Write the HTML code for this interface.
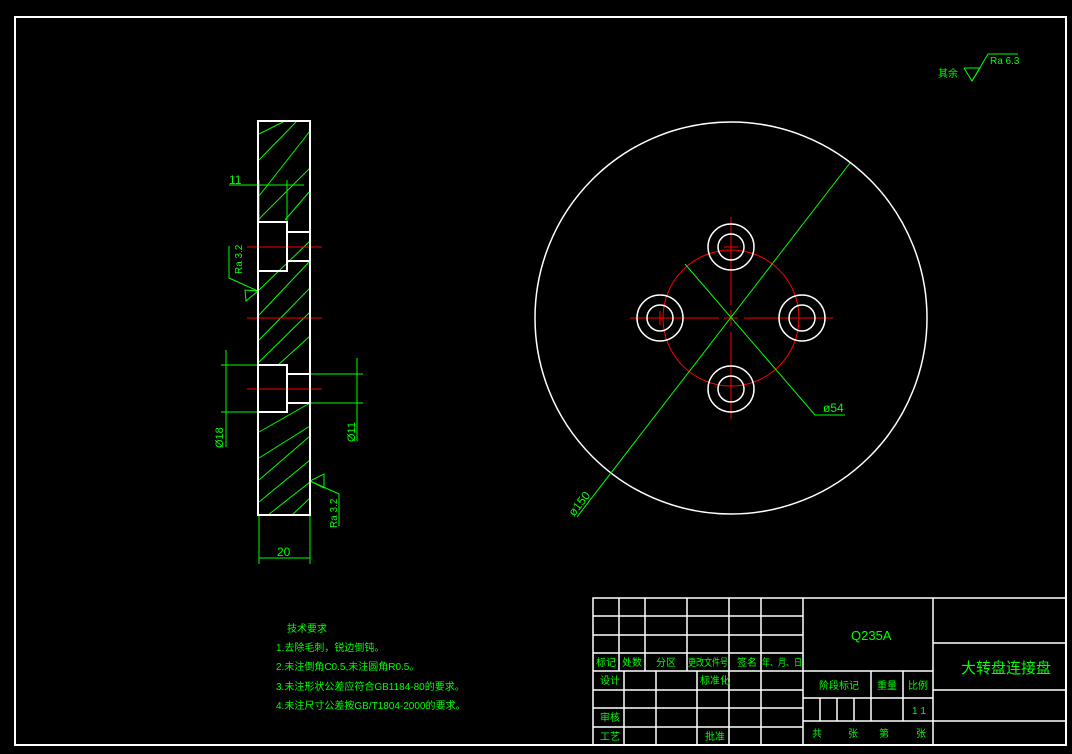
<!DOCTYPE html>
<html><head><meta charset="utf-8"><style>
html,body{margin:0;padding:0;background:#000;width:1072px;height:754px;overflow:hidden}
svg{display:block}
text{font-family:"Liberation Sans","Noto Sans CJK SC",sans-serif;fill:#00ff00}
</style></head><body>
<svg width="1072" height="754" viewBox="0 0 1072 754" xmlns="http://www.w3.org/2000/svg">
<rect x="15" y="17" width="1051" height="728" fill="none" stroke="#fff" stroke-width="2"/>
<!-- roughness top right -->
<text x="938" y="77" font-size="10">其余</text>
<polyline points="964,68 980,68 972,81 964,68" fill="none" stroke="#0f0" stroke-width="1"/>
<polyline points="972,81 988,54 1018,54" fill="none" stroke="#0f0" stroke-width="1"/>
<text x="990" y="64" font-size="10">Ra 6.3</text>

<!-- section view -->
<g stroke="#0f0" stroke-width="1">
<line x1="259" y1="134" x2="285" y2="121"/>
<line x1="259" y1="160" x2="297" y2="121"/>
<line x1="259" y1="196" x2="310" y2="131"/>
<line x1="259" y1="219" x2="310" y2="168"/>
<line x1="285" y1="220" x2="310" y2="191"/>
<line x1="259" y1="290" x2="310" y2="241"/>
<line x1="259" y1="315" x2="310" y2="261"/>
<line x1="259" y1="340" x2="310" y2="288"/>
<line x1="259" y1="362" x2="310" y2="312"/>
<line x1="278" y1="365" x2="310" y2="336"/>
<line x1="259" y1="432" x2="310" y2="403"/>
<line x1="259" y1="458" x2="310" y2="426"/>
<line x1="259" y1="480" x2="310" y2="436"/>
<line x1="259" y1="502" x2="310" y2="460"/>
<line x1="268" y1="515" x2="310" y2="482"/>
<line x1="292" y1="515" x2="310" y2="498"/>
<line x1="229" y1="185" x2="304" y2="185"/>
<line x1="259" y1="180" x2="259" y2="222"/>
<line x1="287" y1="180" x2="287" y2="222"/>
<line x1="221" y1="365" x2="258" y2="365"/>
<line x1="221" y1="412" x2="258" y2="412"/>
<line x1="226" y1="350" x2="226" y2="447"/>
<line x1="310" y1="374" x2="363" y2="374"/>
<line x1="310" y1="403" x2="363" y2="403"/>
<line x1="357" y1="358" x2="357" y2="441"/>
<line x1="259" y1="515" x2="259" y2="564"/>
<line x1="310" y1="515" x2="310" y2="564"/>
<line x1="259" y1="558" x2="310" y2="558"/>
<polyline points="229,246 229,278 258,291 246,301 245,290 258,291" fill="none"/>
<polyline points="339,526 339,494 310,481 324,474 324,488 310,481" fill="none"/>
</g>
<text x="229" y="184" font-size="12">11</text>
<text x="277" y="556" font-size="12">20</text>
<text transform="translate(242,274) rotate(-90)" font-size="10">Ra 3.2</text>
<text transform="translate(337,528) rotate(-90)" font-size="10">Ra 3.2</text>
<text transform="translate(223,448) rotate(-90)" font-size="11">Ø18</text>
<text transform="translate(355,442) rotate(-90)" font-size="11">Ø11</text>
<g stroke="#f00" stroke-width="1">
<line x1="247" y1="247" x2="322" y2="247"/>
<line x1="247" y1="318" x2="322" y2="318"/>
<line x1="247" y1="389" x2="322" y2="389"/>
</g>
<g fill="none" stroke="#fff" stroke-width="2">
<rect x="258" y="121" width="52" height="394"/>
<polyline points="258,222 287,222 287,271 258,271"/>
<line x1="287" y1="232" x2="310" y2="232"/><line x1="287" y1="261" x2="310" y2="261"/>
<polyline points="258,365 287,365 287,412 258,412"/>
<line x1="287" y1="374" x2="310" y2="374"/><line x1="287" y1="403" x2="310" y2="403"/>
</g>

<!-- front view -->
<circle cx="731" cy="318" r="196" fill="none" stroke="#fff" stroke-width="1.5"/>
<circle cx="731" cy="318" r="68" fill="none" stroke="#f00" stroke-width="1"/>
<g stroke="#f00" stroke-width="1">
<line x1="630" y1="318" x2="719" y2="318"/><line x1="724" y1="318" x2="738" y2="318"/><line x1="744" y1="318" x2="833" y2="318"/>
<line x1="731" y1="217" x2="731" y2="305"/><line x1="731" y1="310" x2="731" y2="326"/><line x1="731" y1="332" x2="731" y2="419"/>
</g>
<g fill="none" stroke="#fff" stroke-width="1.5">
<circle cx="731" cy="247" r="23"/><circle cx="731" cy="247" r="13"/>
<circle cx="731" cy="389" r="23"/><circle cx="731" cy="389" r="13"/>
<circle cx="660" cy="318" r="23"/><circle cx="660" cy="318" r="13"/>
<circle cx="802" cy="318" r="23"/><circle cx="802" cy="318" r="13"/>
</g>
<g stroke="#f00"><line x1="724" y1="247" x2="738" y2="247"/><line x1="660" y1="311" x2="660" y2="325"/></g>
<g stroke="#0f0" stroke-width="1">
<line x1="850" y1="163" x2="577" y2="517"/>
<polyline points="685,264 815,415 845,415" fill="none"/>
</g>
<text x="823" y="412" font-size="12">ø54</text>
<text transform="translate(574,517) rotate(-52)" font-size="12">ø150</text>

<!-- tech requirements -->
<g font-size="10">
<text x="287" y="632">技术要求</text>
<text x="276" y="651">1.去除毛刺，锐边倒钝。</text>
<text x="276" y="670">2.未注倒角C0.5,未注圆角R0.5。</text>
<text x="276" y="690">3.未注形状公差应符合GB1184-80的要求。</text>
<text x="276" y="709">4.未注尺寸公差按GB/T1804-2000的要求。</text>
</g>

<!-- title block -->
<g stroke="#fff" stroke-width="1.5" fill="none">
<rect x="593" y="598" width="473" height="147"/>
<line x1="593" y1="616" x2="803" y2="616"/><line x1="593" y1="635" x2="803" y2="635"/>
<line x1="593" y1="653" x2="803" y2="653"/><line x1="593" y1="671" x2="933" y2="671"/>
<line x1="593" y1="690" x2="803" y2="690"/><line x1="593" y1="708" x2="803" y2="708"/>
<line x1="593" y1="727" x2="803" y2="727"/>
<line x1="619" y1="598" x2="619" y2="671"/><line x1="645" y1="598" x2="645" y2="671"/>
<line x1="687" y1="598" x2="687" y2="671"/><line x1="729" y1="598" x2="729" y2="745"/>
<line x1="761" y1="598" x2="761" y2="745"/><line x1="803" y1="598" x2="803" y2="745"/>
<line x1="624" y1="671" x2="624" y2="745"/><line x1="656" y1="671" x2="656" y2="745"/>
<line x1="697" y1="671" x2="697" y2="745"/>
<line x1="803" y1="698" x2="933" y2="698"/><line x1="803" y1="721" x2="1066" y2="721"/>
<line x1="871" y1="671" x2="871" y2="721"/><line x1="903" y1="671" x2="903" y2="721"/>
<line x1="820" y1="698" x2="820" y2="721"/><line x1="837" y1="698" x2="837" y2="721"/><line x1="854" y1="698" x2="854" y2="721"/>
<line x1="933" y1="598" x2="933" y2="745"/>
<line x1="933" y1="643" x2="1066" y2="643"/><line x1="933" y1="690" x2="1066" y2="690"/>
</g>
<g font-size="10">
<text x="596" y="666">标记</text><text x="622" y="666">处数</text><text x="656" y="666">分区</text>
<text x="688" y="666" textLength="40" lengthAdjust="spacingAndGlyphs">更改文件号</text><text x="737" y="666">签名</text><text x="762" y="666" textLength="40" lengthAdjust="spacingAndGlyphs">年、月、日</text>
<text x="600" y="684">设计</text><text x="700" y="684">标准化</text>
<text x="600" y="721">审核</text><text x="600" y="740">工艺</text><text x="705" y="740">批准</text>
<text x="819" y="689">阶段标记</text><text x="877" y="689">重量</text><text x="908" y="689">比例</text>
<text x="912" y="714">1 1</text>
<text x="812" y="737">共</text><text x="848" y="737">张</text><text x="879" y="737">第</text><text x="916" y="737">张</text>
</g>
<text x="851" y="640" font-size="13">Q235A</text>
<text x="961" y="673" font-size="15">大转盘连接盘</text>
</svg>
</body></html>
